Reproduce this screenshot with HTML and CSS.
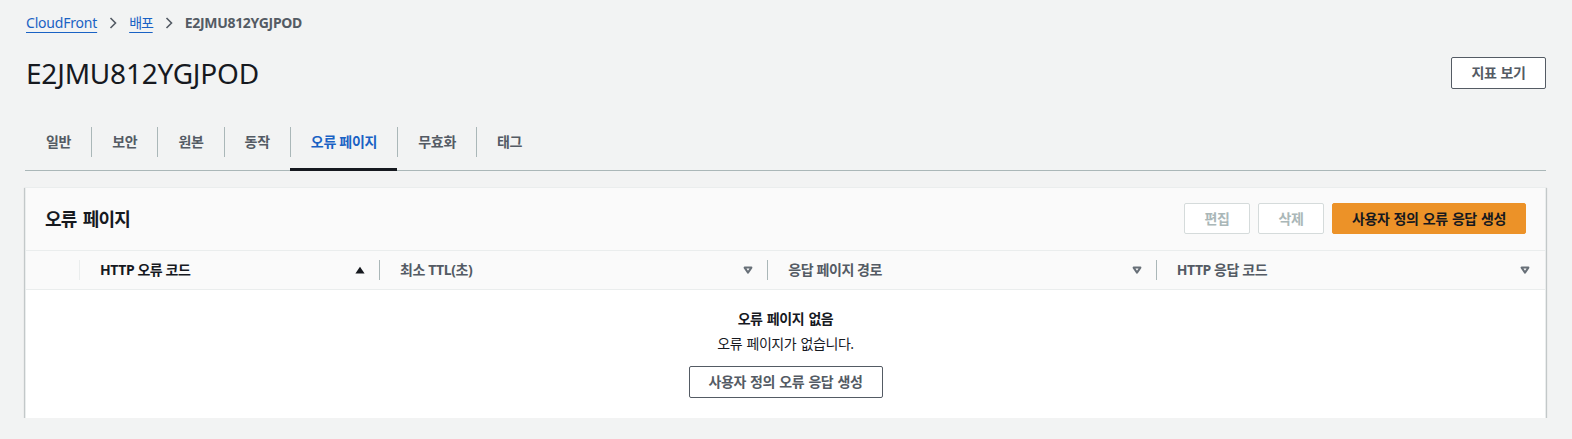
FILE: index.html
```html
<!DOCTYPE html>
<html lang="ko">
<head>
<meta charset="utf-8">
<title>E2JMU812YGJPOD</title>
<link rel="stylesheet" href="styles.css">
</head>
<body>
<nav class="breadcrumbs">
  <a class="crumb-link" href="#">CloudFront</a>
  <svg class="chev" width="8" height="12" viewBox="0 0 8 12"><path d="M1.5 1 L6.5 6 L1.5 11" fill="none" stroke="#545b64" stroke-width="1.6"/></svg>
  <a class="crumb-link ko" href="#">배포</a>
  <svg class="chev" width="8" height="12" viewBox="0 0 8 12"><path d="M1.5 1 L6.5 6 L1.5 11" fill="none" stroke="#545b64" stroke-width="1.6"/></svg>
  <span class="crumb-current">E2JMU812YGJPOD</span>
</nav>

<header class="page-header">
  <h1 class="page-title">E2JMU812YGJPOD</h1>
  <button class="btn btn-normal ko">지표 보기</button>
</header>

<div class="tabs">
  <div class="tab"><span class="tab-label">일반</span></div>
  <div class="tab"><span class="tab-label sep">보안</span></div>
  <div class="tab"><span class="tab-label sep">원본</span></div>
  <div class="tab"><span class="tab-label sep">동작</span></div>
  <div class="tab active"><span class="tab-label sep">오류 페이지</span></div>
  <div class="tab"><span class="tab-label sep">무효화</span></div>
  <div class="tab"><span class="tab-label sep">태그</span></div>
</div>

<section class="panel">
  <div class="panel-header">
    <h2 class="panel-title">오류 페이지</h2>
    <div class="actions">
      <button class="btn btn-disabled ko" disabled>편집</button>
      <button class="btn btn-disabled ko" disabled>삭제</button>
      <button class="btn btn-primary ko">사용자 정의 오류 응답 생성</button>
    </div>
  </div>
  <div class="thead">
    <div class="th th-select"><div class="th-inner light"></div></div>
    <div class="th"><div class="th-inner sorted"><span>HTTP 오류 코드</span>
      <svg width="10" height="8" viewBox="0 0 10 8"><path d="M5 0.8 L9.6 7.4 H0.4 Z" fill="#16191f"/></svg></div></div>
    <div class="th"><div class="th-inner"><span>최소 TTL(초)</span>
      <svg width="10" height="8" viewBox="0 0 10 8"><path d="M1.6 1.6 H8.4 L5 6.6 Z" fill="none" stroke="#687078" stroke-width="2" stroke-linejoin="round"/></svg></div></div>
    <div class="th"><div class="th-inner"><span>응답 페이지 경로</span>
      <svg width="10" height="8" viewBox="0 0 10 8"><path d="M1.6 1.6 H8.4 L5 6.6 Z" fill="none" stroke="#687078" stroke-width="2" stroke-linejoin="round"/></svg></div></div>
    <div class="th th-last"><div class="th-inner"><span>HTTP 응답 코드</span>
      <svg width="10" height="8" viewBox="0 0 10 8"><path d="M1.6 1.6 H8.4 L5 6.6 Z" fill="none" stroke="#687078" stroke-width="2" stroke-linejoin="round"/></svg></div></div>
  </div>
  <div class="empty">
    <div class="empty-title ko">오류 페이지 없음</div>
    <div class="empty-text ko">오류 페이지가 없습니다.</div>
    <button class="btn btn-normal btn-wide ko">사용자 정의 오류 응답 생성</button>
  </div>
</section>
</body>
</html>
```

FILE: styles.css
```css
* { box-sizing: border-box; }

body {
  margin: 0;
  padding: 13px 26px 0 25px;
  background: #f2f3f3;
  font-family: "Noto Sans", "Noto Sans CJK KR", sans-serif;
  font-size: 14px;
  line-height: 20px;
  color: #16191f;
}

.ko { letter-spacing: -0.03em; word-spacing: 1px; }

.breadcrumbs {
  display: flex;
  align-items: center;
  height: 20px;
  padding-left: 1px;
}

.crumb-link {
  color: #1a62c4;
  text-decoration: underline;
  text-underline-offset: 4px;
  text-decoration-thickness: 1px;
  letter-spacing: -0.2px;
}

.crumb-link.ko { letter-spacing: -0.08em; }

.chev { margin: 0 12px; flex: none; }

.crumb-current {
  color: #545b64;
  font-weight: 700;
  letter-spacing: -0.3px;
}

.page-header {
  display: flex;
  align-items: center;
  justify-content: space-between;
  margin-top: 24px;
  height: 32px;
}

.page-title {
  margin: 0 0 0 1px;
  font-size: 28px;
  font-weight: 400;
  line-height: 32px;
  letter-spacing: -0.2px;
}

.btn {
  font-family: inherit;
  font-size: 14px;
  font-weight: 700;
  line-height: 20px;
  height: 31px;
  padding: 0 16px;
  border-radius: 2px;
  background: #fff;
  cursor: pointer;
  white-space: nowrap;
}

.btn-normal {
  border: 1px solid #545b64;
  color: #545b64;
}

.page-header .btn-normal { width: 95px; height: 32px; }

.btn-disabled {
  border: 1px solid #d5dbdb;
  color: #aab7b8;
  cursor: default;
  width: 66px;
}

.btn-primary {
  border: 1px solid #ec9228;
  background: #ec9228;
  color: #16191f;
  width: 194px;
}

.btn-wide { width: 194px; height: 32px; }

.tabs {
  display: flex;
  margin-top: 28px;
  border-bottom: 1px solid #aab7b8;
}

.tab {
  padding: 10px 0 11px;
  border-bottom: 3px solid transparent;
  margin-bottom: -1px;
}

.tab-label {
  display: block;
  padding: 5px 20px 5px 20px;
  line-height: 20px;
  font-weight: 700;
  color: #545b64;
  letter-spacing: -0.02em;
  word-spacing: 0;
  border-left: 1px solid transparent;
}

.tab-label.sep { border-left-color: #aab7b8; }

.tab.active { border-bottom-color: #16191f; }
.tab.active .tab-label { color: #1a62c4; }

.panel {
  margin-top: 16px;
  background: #fff;
  border: 1px solid #eaeded;
  border-bottom: none;
  box-shadow: 0 1px 1px 0 rgba(0, 28, 36, 0.3), 1px 1px 1px 0 rgba(0, 28, 36, 0.15), -1px 1px 1px 0 rgba(0, 28, 36, 0.15);
}

.panel-header {
  display: flex;
  align-items: center;
  justify-content: space-between;
  padding: 15px 19px 16px 19px;
  background: #fafafa;
  border-bottom: 1px solid #eaeded;
}

.panel-title {
  margin: 0;
  font-size: 18px;
  font-weight: 700;
  line-height: 22px;
  letter-spacing: -0.04em;
  word-spacing: 2px;
}

.actions {
  display: flex;
  gap: 8px;
}

.thead {
  display: grid;
  grid-template-columns: 54px 300px 1fr 1fr 1fr;
  height: 39px;
  background: #fafafa;
  border-bottom: 1px solid #eaeded;
}

.th {
  display: flex;
  align-items: center;
}

.th-inner {
  flex: 1;
  height: 20px;
  display: flex;
  align-items: center;
  justify-content: space-between;
  padding: 0 14px 0 20px;
  border-right: 1px solid #aab7b8;
  font-weight: 700;
  color: #545b64;
  letter-spacing: -0.03em;
}

.th-inner.light { border-right-color: #eaeded; }
.th-inner.sorted { color: #16191f; }
.th-last .th-inner { border-right: none; padding-right: 15px; }

.empty {
  display: flex;
  flex-direction: column;
  align-items: center;
  padding: 19px 0 20px;
}

.empty-title { font-weight: 700; }
.empty-text { margin-top: 5px; }
.empty .btn { margin-top: 12px; }
```
